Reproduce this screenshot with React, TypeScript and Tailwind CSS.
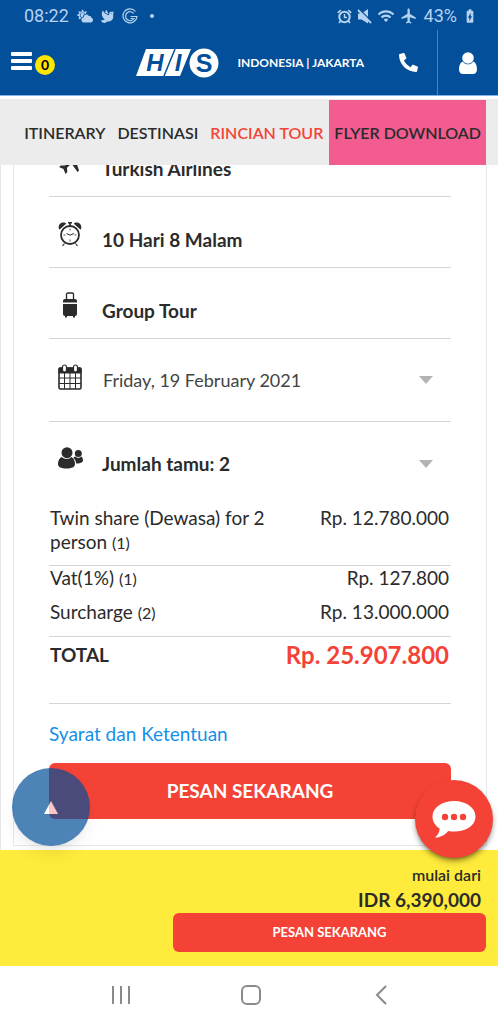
import React, { useState } from "react";
import { MdWifi, MdFlight, MdBatteryChargingFull } from "react-icons/md";
import { FaCloudSun, FaDove, FaPhoneAlt } from "react-icons/fa";

const prices = [
  { name: "Twin share (Dewasa) for 2 person", qty: 1, price: "Rp. 12.780.000" },
  { name: "Vat(1%)", qty: 1, price: "Rp. 127.800" },
  { name: "Surcharge", qty: 2, price: "Rp. 13.000.000" },
];

const rowStyles = [
  "h-[60px] border-b border-gray-300 pb-[10px]",
  "h-[34px] pb-[10px]",
  "h-[37px] border-b border-gray-300 pb-3",
];

export default function App() {
  return (
    <div className="min-h-screen bg-white font-['Lato',sans-serif] text-[#2b2b2b]">
      <div className="sticky top-0 z-20">
        <StatusBar />
        <Header />
        <Tabs />
      </div>
      <main className="-mt-[39px] border-l border-gray-200 pl-3 pr-[11px] pb-1">
        <TourDetails />
      </main>
      <BottomBar />
    </div>
  );
}

function StatusBar() {
  return (
    <div className="flex h-[30px] items-center bg-[#034f99] pl-6 pr-5 pt-[2px] font-['Roboto',sans-serif] text-lg text-[#b5d2f0]">
      <span>08:22</span>
      <div className="ml-2 flex items-center gap-2">
        <FaCloudSun size={16} />
        <FaDove size={13} />
        <svg width="16" height="16" viewBox="0 0 16 16" fill="none" stroke="currentColor">
          <path d="M13.500 3.500A7 7 0 1 0 15 8.500H8.500" strokeWidth="1.200" />
          <path d="M11.700 5.500A4.500 4.500 0 1 0 12 10.500H8.500" strokeWidth="1.200" />
        </svg>
        <span className="ml-1 h-1 w-1 rounded-full bg-[#b5d2f0]" />
      </div>
      <div className="ml-auto flex items-center gap-[5px]">
        <svg width="15" height="15" viewBox="0 0 15 15" fill="none" stroke="currentColor">
          <circle cx="7.500" cy="8" r="5.200" strokeWidth="2" />
          <path d="M7.500 5v3.500H10" strokeWidth="1.500" />
          <path d="M.8 3.800L3.800 1M14.200 3.800L11.200 1M3.500 12L2 14M11.500 12L13 14" strokeWidth="1.700" />
        </svg>
        <svg width="15" height="15" viewBox="0 0 15 15" fill="currentColor">
          <path d="M1 4.500h3.500L11 0v14.500L4.500 10.500H1z" />
          <path d="M2 0l12 12" stroke="#034f99" strokeWidth="1.500" />
          <path d="M1 1l13 13" stroke="currentColor" strokeWidth="1.800" />
        </svg>
        <MdWifi size={18} />
        <MdFlight size={18} />
        <span className="ml-px">43%</span>
        <MdBatteryChargingFull size={16} />
      </div>
    </div>
  );
}

function Header() {
  return (
    <header className="flex h-[66px] items-center border-b border-[#84b1e6] bg-[#034f99] text-white">
      <button className="mb-1 ml-[11px] flex items-center gap-[3px]" aria-label="Menu">
        <svg width="21" height="18" viewBox="0 0 21 18" fill="currentColor">
          <rect width="21" height="4" rx="1" />
          <rect y="7" width="21" height="4" rx="1" />
          <rect y="14" width="21" height="4" rx="1" />
        </svg>
        <span className="mt-2 flex h-5 w-5 items-center justify-center rounded-full bg-[#ffe600] text-sm font-bold text-black">0</span>
      </button>
      <a href="#home" aria-label="HIS" className="ml-auto">
        <HisLogo />
      </a>
      <span className="ml-[18px] text-xs font-bold">INDONESIA | JAKARTA</span>
      <button className="ml-[35px]" aria-label="Phone">
        <FaPhoneAlt size={19} className="-scale-x-100 rotate-90" />
      </button>
      <button className="ml-[19px] flex h-full w-[61px] items-center justify-center border-l border-[#4b83bb]" aria-label="Account">
        <svg width="18" height="22" viewBox="0 0 18 22" fill="currentColor">
          <circle cx="9" cy="6" r="5.800" />
          <path d="M3.800 9.400C1.400 10.200 0 13.300 0 17.400 0 20 1.500 22 3.800 22h10.400c2.300 0 3.800-2 3.800-4.600 0-4.100-1.400-7.200-3.800-8-1.300 1.900-3 2.900-5.200 2.900s-3.900-1-5.200-2.900z" />
        </svg>
      </button>
    </header>
  );
}

function HisLogo() {
  return (
    <svg width="83" height="30" viewBox="0 0 83 30">
      <path d="M10 1h45L44 28H0z" fill="#fff" />
      <path d="M39 1L28 28" stroke="#034f99" strokeWidth="1.500" />
      <circle cx="68" cy="15" r="14.500" fill="#fff" />
      <g fill="#034f99" fontFamily="Liberation Sans" fontWeight="700" textAnchor="middle">
        <text x="19" y="23" fontSize="24" fontStyle="italic">H</text>
        <text x="42" y="23" fontSize="24" fontStyle="italic">I</text>
        <text x="68" y="24" fontSize="25">S</text>
      </g>
    </svg>
  );
}

function Tabs() {
  return (
    <nav className="mt-[3px] flex h-[66px] items-stretch justify-end whitespace-nowrap bg-[#ececec] pr-3 text-base font-semibold">
      <a href="#itinerary" className="flex items-center px-[6px] pt-px">ITINERARY</a>
      <a href="#destinasi" className="flex items-center px-[6px] pt-px">DESTINASI</a>
      <a href="#rincian" className="flex items-center px-[6px] pt-px text-[#f44336]">RINCIAN TOUR</a>
      <a href="#flyer" className="mt-px flex items-center bg-[#f25c90] px-[5px]">FLYER DOWNLOAD</a>
    </nav>
  );
}

function InfoRow({ icon, children }: { icon: React.ReactNode; children: React.ReactNode }) {
  return (
    <div className="flex h-[71px] items-end border-b border-gray-300 pb-[15px]">
      <span className="mb-[5px] flex h-[26px] w-[42px] items-center justify-center">{icon}</span>
      <span className="ml-[11px] text-[19px] leading-6 font-bold">{children}</span>
    </div>
  );
}

function TourDetails() {
  const [date, setDate] = useState("2021-02-19");
  const [open, setOpen] = useState(true);

  return (
    <section className="border border-t-0 border-gray-200 px-[35px] pb-[26px]">
      <InfoRow icon={<PlaneIcon />}>Turkish Airlines</InfoRow>
      <InfoRow icon={<ClockIcon />}>10 Hari 8 Malam</InfoRow>
      <InfoRow icon={<LuggageIcon />}>Group Tour</InfoRow>

      {/* Departure date */}
      <div className="flex h-[83px] items-center border-b border-gray-300">
        <label htmlFor="date" className="mb-[6px] flex w-[42px] justify-center" aria-label="Tanggal">
          <CalendarIcon />
        </label>
        <select
          id="date"
          value={date}
          onChange={e => setDate(e.target.value)}
          className="ml-3 min-w-0 flex-1 appearance-none bg-transparent text-lg leading-6 text-[#444]"
        >
          <option value="2021-02-19">Friday, 19 February 2021</option>
        </select>
        <Caret />
      </div>

      {/* Guests */}
      <button onClick={() => setOpen(!open)} className="flex h-[84px] w-full items-center text-left">
        <span className="mb-3 flex w-[42px] justify-center">
          <GuestsIcon />
        </span>
        <span className="ml-[11px] flex-1 text-[19px] leading-6 font-bold">Jumlah tamu: 2</span>
        <Caret />
      </button>

      {open && (
        <table className="w-full border-separate border-spacing-0 text-[19px] leading-6">
          <tbody>
            {prices.map((p, i) => (
              <tr key={p.name}>
                <td className={`align-top pl-px ${rowStyles[i]}`}>
                  <span className="block max-w-[230px]">
                    {p.name} <small className="text-base leading-none">{`(${p.qty})`}</small>
                  </span>
                </td>
                <td className={`align-top pr-[2px] text-right whitespace-nowrap ${rowStyles[i]}`}>{p.price}</td>
              </tr>
            ))}
            <tr>
              <td className="h-[67px] border-b border-gray-300 pt-1 pl-px align-top text-[19px] leading-7 font-bold">TOTAL</td>
              <td className="h-[67px] border-b border-gray-300 pt-1 pr-[2px] text-right align-top text-2xl leading-7 font-bold text-[#f44336]">
                Rp. 25.907.800
              </td>
            </tr>
          </tbody>
        </table>
      )}

      <a href="#terms" className="mt-[18px] block text-[19px] leading-6 text-[#1590e9]">Syarat dan Ketentuan</a>
      <button className="mt-[17px] h-14 w-full rounded-md bg-[#f44336] text-[19px] font-bold text-white">PESAN SEKARANG</button>
    </section>
  );
}

function BottomBar() {
  return (
    <footer className="sticky bottom-0 z-10">
      {/* Floating buttons */}
      <button
        aria-label="Kembali ke atas"
        className="absolute -top-[82px] left-3 flex h-[78px] w-[78px] items-center justify-center rounded-full bg-[#034f99] opacity-70 shadow-lg"
      >
        <svg width="14" height="13" viewBox="0 0 14 13" fill="#fff">
          <path d="M7 0l7 13H0z" />
        </svg>
      </button>
      <button
        aria-label="Chat"
        className="absolute -top-[70px] right-[5px] flex h-[78px] w-[78px] items-center justify-center rounded-full bg-[#f44336] shadow-md shadow-black/40"
      >
        <svg width="44" height="37" viewBox="0 0 44 37">
          <path d="M22 0c12 0 21.500 6.500 21.500 15.500S34 30.500 22 30.500c-2 0-4-.2-5.800-.6C13 34 8 36.500 3 36.500c3-2.500 4.500-5.500 4.700-9C3 24.700.5 20.500.5 15.500.5 6.500 10 0 22 0z" fill="#fff" />
          <g fill="#f44336">
            <circle cx="13" cy="16" r="3.200" />
            <circle cx="22" cy="16" r="3.200" />
            <circle cx="31" cy="16" r="3.200" />
          </g>
        </svg>
      </button>
      <div className="flex flex-col items-end bg-[#ffeb3b] pt-[14px] pr-3 pb-[14px]">
        <p className="pr-[5px] text-base leading-[22px] font-semibold">mulai dari</p>
        <p className="pr-[5px] text-[19px] leading-[27px] font-bold">IDR 6,390,000</p>
        <button className="h-[39px] w-[313px] rounded-md bg-[#f44336] text-[13px] font-bold text-white">PESAN SEKARANG</button>
      </div>
      <div className="flex h-[58px] items-center justify-around bg-white pr-[52px] pl-14 text-[#8a8a8a]">
        <button aria-label="Recents">
          <svg width="20" height="20" viewBox="0 0 20 20" fill="none" stroke="currentColor" strokeWidth="2">
            <path d="M2 1v18M10 1v18M18 1v18" />
          </svg>
        </button>
        <button aria-label="Home">
          <svg width="20" height="20" viewBox="0 0 20 20" fill="none" stroke="currentColor" strokeWidth="2">
            <rect x="1" y="1" width="18" height="18" rx="5" />
          </svg>
        </button>
        <button aria-label="Back">
          <svg width="20" height="20" viewBox="0 0 20 20" fill="none" stroke="currentColor" strokeWidth="2">
            <path d="M15 1l-9 9 9 9" />
          </svg>
        </button>
      </div>
    </footer>
  );
}

function Caret() {
  return (
    <svg className="mr-[18px]" width="14" height="8" viewBox="0 0 14 8" fill="#b3b3b3">
      <path d="M0 0h14L7 8z" />
    </svg>
  );
}

function PlaneIcon() {
  return (
    <svg width="24" height="26" viewBox="0 0 24 26" fill="#2b2b2b">
      <path d="M22.500 1.500c1 1 .5 3-1 4.500l-4 4 3.500 10.500-1.500 1.500-6-8.500-4.500 4.300.3 4.200-1.800 2-2-5L1 17l1.800-1.600 4.200.2 4-4.600L3 5l1.500-1.500L14 7l4-4.200c1.500-1.500 3.500-2.300 4.500-1.300z" />
    </svg>
  );
}

function ClockIcon() {
  return (
    <svg width="24" height="26" viewBox="0 0 24 26" fill="none" stroke="#2b2b2b">
      <circle cx="12" cy="14" r="9" strokeWidth="1.800" />
      <path d="M12 7.500v2M12 18.500v2M5.500 14h2M16.500 14h2" strokeWidth=".8" />
      <path d="M8.500 12.500L12 14.200l4-1.700" strokeWidth="1" />
      <path d="M6.500 22.500l-2 2.500M17.500 22.500l2 2.500" strokeWidth="1.200" />
      <path d="M1 8C-.5 4 3.500.3 7.500 2c.5.200.7.500.3.900L2 8.300c-.4.300-.8.200-1-.3zM23 8c1.500-4-2.500-7.700-6.500-6-.5.200-.7.500-.3.900L22 8.300c.4.300.8.200 1-.3z" fill="#2b2b2b" stroke="none" />
      <path d="M10 1.800h4M12 2v3" strokeWidth="1.600" />
    </svg>
  );
}

function LuggageIcon() {
  return (
    <svg width="14" height="26" viewBox="0 0 14 26" fill="#2b2b2b">
      <path d="M3.500 8V2.200C3.500 1.500 4 1 4.700 1h4.600c.7 0 1.200.5 1.200 1.200V8" fill="none" stroke="#2b2b2b" strokeWidth="1.300" />
      <path d="M2 7h10c1.100 0 2 .9 2 2v1.500H0V9c0-1.100.9-2 2-2zM0 12h14v10c0 1.100-.9 2-2 2H2c-1.100 0-2-.9-2-2z" />
      <path d="M2 24h2v1.500H2zM10 24h2v1.500h-2z" />
    </svg>
  );
}

function CalendarIcon() {
  return (
    <svg width="24" height="26" viewBox="0 0 24 26" fill="none" stroke="#2b2b2b">
      <rect x="1" y="4" width="22" height="21" rx="1.500" strokeWidth="1.600" />
      <path d="M1 4h22v5H1z" fill="#2b2b2b" />
      <path d="M6.500 9v16M12 9v16M17.500 9v16M1 14h22M1 19.500h22" strokeWidth="1" />
      <rect x="4.500" y="1" width="4" height="7" rx="2" fill="#fff" strokeWidth="1.200" />
      <rect x="15.500" y="1" width="4" height="7" rx="2" fill="#fff" strokeWidth="1.200" />
    </svg>
  );
}

function GuestsIcon() {
  return (
    <svg width="25" height="22" viewBox="0 0 25 22" fill="#2b2b2b">
      <circle cx="9" cy="5.700" r="5.500" />
      <path d="M3.800 10C1.300 11 0 13.700 0 17c0 3 3 4.500 8.500 4.500S17 20 17 17c0-3.300-1.300-6-3.800-7-1 1.300-2.600 2-4.400 2S4.800 11.300 3.800 10z" />
      <circle cx="20.300" cy="6.500" r="3.500" />
      <path d="M17.200 9.500c.8.800 1.900 1.300 3.200 1.300s2.200-.5 3-1.300c1 .7 1.600 2.200 1.600 3.800 0 2-2 3.200-6.800 3.200-.3-2.300-1.300-4.300-2.800-5.500.4-.7 1-1.200 1.800-1.500z" />
    </svg>
  );
}
